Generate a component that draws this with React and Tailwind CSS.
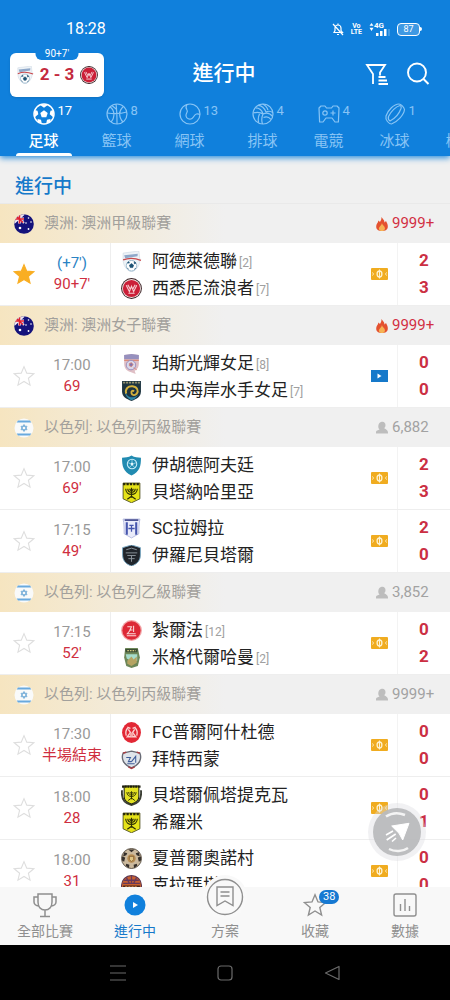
import { useState } from "react";
import clsx from "clsx";

const sports = [
  { name: "足球", count: 17, icon: "soccer", width: "w-[73px]" },
  { name: "籃球", count: 8, icon: "basketball", width: "w-[73px]" },
  { name: "網球", count: 13, icon: "tennis", width: "w-[73px]" },
  { name: "排球", count: 4, icon: "volleyball", width: "w-[73px]" },
  { name: "電競", count: 4, icon: "esports", width: "w-[59px]" },
  { name: "冰球", count: 1, icon: "hockey", width: "w-[73px]" },
  { name: "棒球", icon: "tennis", width: "w-[59px]" },
];

const leagues = [
  {
    country: "au",
    name: "澳洲: 澳洲甲級聯賽",
    viewers: "9999+",
    hot: true,
    matches: [
      {
        time: "(+7')",
        status: "90+7'",
        extra: true,
        starred: true,
        media: "field",
        teams: [
          { name: "阿德萊德聯", rank: 2, crest: "adelaide", score: 2 },
          { name: "西悉尼流浪者", rank: 7, crest: "wanderers", score: 3 },
        ],
      },
    ],
  },
  {
    country: "au",
    name: "澳洲: 澳洲女子聯賽",
    viewers: "9999+",
    hot: true,
    matches: [
      {
        time: "17:00",
        status: "69",
        media: "video",
        teams: [
          { name: "珀斯光輝女足", rank: 8, crest: "perth", score: 0 },
          { name: "中央海岸水手女足", rank: 7, crest: "mariners", score: 0 },
        ],
      },
    ],
  },
  {
    country: "il",
    name: "以色列: 以色列丙級聯賽",
    viewers: "6,882",
    matches: [
      {
        time: "17:00",
        status: "69'",
        media: "field",
        teams: [
          { name: "伊胡德阿夫廷", crest: "blueShield", score: 2 },
          { name: "貝塔納哈里亞", crest: "menorah", score: 3 },
        ],
      },
      {
        time: "17:15",
        status: "49'",
        media: "field",
        teams: [
          { name: "SC拉姆拉", crest: "ramla", score: 2 },
          { name: "伊羅尼貝塔爾", crest: "blackShield", score: 0 },
        ],
      },
    ],
  },
  {
    country: "il",
    name: "以色列: 以色列乙級聯賽",
    viewers: "3,852",
    matches: [
      {
        time: "17:15",
        status: "52'",
        media: "field",
        teams: [
          { name: "紮爾法", rank: 12, crest: "redRound", score: 0 },
          { name: "米格代爾哈曼", rank: 2, crest: "green", score: 2 },
        ],
      },
    ],
  },
  {
    country: "il",
    name: "以色列: 以色列丙級聯賽",
    viewers: "9999+",
    matches: [
      {
        time: "17:30",
        status: "半場結束",
        media: "field",
        teams: [
          { name: "FC普爾阿什杜德", crest: "redOval", score: 0 },
          { name: "拜特西蒙", crest: "silver", score: 0 },
        ],
      },
      {
        time: "18:00",
        status: "28",
        media: "field",
        teams: [
          { name: "貝塔爾佩塔提克瓦", crest: "menorahWreath", score: 0 },
          { name: "希羅米", crest: "menorah", score: 1 },
        ],
      },
      {
        time: "18:00",
        status: "31",
        media: "field",
        teams: [
          { name: "夏普爾奧諾村", crest: "ball", score: 0 },
          { name: "克拉瑪塔", crest: "orange", score: 0 },
        ],
      },
    ],
  },
];

const STAR = "M12 1.8l3 7.1 7.7 .6-5.9 5 1.8 7.5-6.6-4-6.6 4 1.8-7.5-5.9-5 7.7-.6z";

function Menorah() {
  return (
    <g fill="none" stroke="#2b2c05" strokeWidth="1.1">
      <path d="M4.5 6.5c0 7 11 7 11 0M6.5 6.5c0 4.5 7 4.5 7 0M8.3 6.5c0 2.2 3.4 2.2 3.4 0M10 5.5v9.5M6 16.5l4-3 4 3" />
    </g>
  );
}

const crests = {
  adelaide: (
    <>
      <path d="M2 2l15-2 1 8c0 6-3 10-8 12-5-2-8-6-8-12z" fill="#eef3f7" stroke="#c6d3df" strokeWidth="0.5" />
      <path d="M3 4l13-1.5-.3 2.5L4 7z" fill="#8fa8c9" />
      <path d="M2 8.5c5-2 11-2 17 .5" fill="none" stroke="#c8484c" strokeWidth="1.2" />
      <circle cx="10" cy="14" r="5" fill="#fff" stroke="#6f9ab8" strokeWidth="0.6" />
      <path d="M10 12l2 1.5-.8 2.3H8.8L8 13.5zM6 11.5l1.5-1.3 .5 1.3zM12.500 10.200l1.8 1.3-1.500.8zM12.500 17.500l1.800-1.200M6 16l1.200 1.500" fill="#1d5274" stroke="#1d5274" strokeWidth="0.6" />
    </>
  ),
  wanderers: (
    <>
      <circle cx="10" cy="10" r="9.9" fill="#3a2226" />
      <circle cx="10" cy="10" r="9" fill="#f0e4e2" />
      <circle cx="10" cy="10" r="8.2" fill="#cb1f38" />
      <path d="M5 7l3 6 2-5 2 5 3-6M6.5 6.5L9 11M13.5 6.5L11 11M7 14.5h6" fill="none" stroke="#f6cdd0" strokeWidth="1.1" />
    </>
  ),
  perth: (
    <>
      <path d="M3 2l7-1 7 1v8c0 4-2 6-4 7l1 3-5-2c-4-1-6-4-6-8z" fill="#dfbfc5" />
      <path d="M3 2l7-1 7 1v4H3z" fill="#9690be" />
      <path d="M3 7h14" stroke="#dd8c79" strokeWidth="1.2" />
      <circle cx="9.5" cy="11.5" r="4.5" fill="#d9d8ea" stroke="#8a7fb5" strokeWidth="0.7" />
      <path d="M8 10l2-.8 1.5 1.8L10 13l-2-.8zM12 14l3 2" fill="#8174ae" stroke="#d98577" strokeWidth="0.8" />
    </>
  ),
  mariners: (
    <>
      <path d="M1 1h18v10c0 5-4 7-9 9-5-2-9-4-9-9z" fill="#1d3440" />
      <path d="M2 2.5h16" stroke="#92906e" strokeWidth="1.5" strokeDasharray="2 .8" />
      <path d="M3.500 9c1 7 7 10 13 5-2 3-4 4.500-6.500 5.200-4-1.700-6.500-5-6.500-10.200z" fill="#2d86a8" />
      <path d="M5 13C3.500 8.500 7 5.500 11 6c4.500 .5 6 4.500 4 7-1.500 2-4.500 1.700-5-.3s1-3 2.500-2" fill="none" stroke="#d4b13d" strokeWidth="1.800" />
    </>
  ),
  blueShield: (
    <>
      <path d="M10 .5c3 2 6 2 9 2 0 8-1 13-9 17C2 15.5 1 10.5 1 2.5c3 0 6 0 9-2z" fill="#218bb1" />
      <circle cx="10.5" cy="8.5" r="4.5" fill="none" stroke="#c8eefa" strokeWidth="1" />
      <path d="M10.5 7l1.500 1.200-.6 1.800H9.600L9 8.200z" fill="#e3f7fc" />
      <path d="M10.5 4v3M6.500 7.300l2.500 .9M14.500 7.300l-2.500 .9M9.600 10l-1.500 2M11.400 10l1.500 2" stroke="#c8eefa" strokeWidth="0.6" />
    </>
  ),
  menorah: (
    <>
      <path d="M2 1h16v15l-8 3.8L2 16z" fill="#e6e318" stroke="#44450f" strokeWidth="0.8" />
      <path d="M2 2h16" stroke="#25260a" strokeWidth="2" strokeDasharray="2.2 1" />
      <Menorah />
    </>
  ),
  menorahWreath: (
    <>
      <path d="M1 5c-1 9 3 13 9 14 6-1 10-5 9-14" fill="none" stroke="#3c3f35" strokeWidth="1.8" />
      <path d="M3 1h14v10c0 4-3 6-7 7-4-1-7-3-7-7z" fill="#e3e222" stroke="#222411" strokeWidth="1" />
      <path d="M1 1.5h18" stroke="#1b1c0c" strokeWidth="2.2" strokeDasharray="2 .5" />
      <g transform="translate(2 1.6) scale(.8)">
        <Menorah />
      </g>
    </>
  ),
  ramla: (
    <>
      <path d="M2 1h16c-1 5-1 10-1 14l-7 4-7-4C3 10 3 5 2 1z" fill="#e9ebfa" stroke="#aeb4dc" strokeWidth="0.8" />
      <path d="M3.5 2h13" stroke="#394187" strokeWidth="1.5" />
      <path d="M5.5 4v12M14.5 4v12" stroke="#4555ad" strokeWidth="2" />
      <path d="M8 7h4M10 7v6M7 10h6" stroke="#4555ad" strokeWidth="1.2" />
    </>
  ),
  blackShield: (
    <>
      <path d="M10 0l8.5 2.5V9c0 6-3 9-8.5 11C4.5 18 1.5 15 1.5 9V2.5z" fill="#20252b" stroke="#78a8c3" strokeWidth="0.9" />
      <path d="M5 4.5l5-1.5 5 1.5M4.5 7.5h11M6 10h8M10 10v6M7 13h6" fill="none" stroke="#8c969d" strokeWidth="0.9" />
    </>
  ),
  redRound: (
    <>
      <circle cx="10" cy="10" r="9.9" fill="#f2a2a5" />
      <circle cx="10" cy="10" r="8.7" fill="#dd2836" />
      <path d="M6 6.5h4l-1.5 3H11M12 5.5v6M9 9.5L6 13h8M5.500 15h9" fill="none" stroke="#fbd9d9" strokeWidth="1" />
    </>
  ),
  green: (
    <>
      <path d="M4 1h12l2 9-2 8-6 2-5-2-2-8z" fill="#6d8758" />
      <path d="M4 2h12l-.5 3h-11z" fill="#3b4e34" />
      <path d="M6 3.5h8" stroke="#d7cc83" strokeWidth="1.3" strokeDasharray="1.5 1" />
      <path d="M4.5 7h11v6l-5 1-5-3z" fill="#a6dccb" />
      <path d="M6 13l4-4 2 3 3-3v6l-5 3-4-2z" fill="#b6a463" />
    </>
  ),
  redOval: (
    <>
      <ellipse cx="10" cy="10" rx="9" ry="9.9" fill="#e22835" />
      <path d="M5 13c-1-3 0-6 2-8M15 13c1-3 0-6-2-8M7 7l2 3-3 4h8l-3-4 2-3M6 5l3 1M14 5l-3 1" fill="none" stroke="#fbd3d3" strokeWidth="1.3" />
      <circle cx="10" cy="12" r="2" fill="#f4a5a5" />
    </>
  ),
  silver: (
    <>
      <path d="M10 2l4 1 4 1c2 5 0 11-8 14C2 15 0 9 2 4l4-1z" fill="#dfe4ea" stroke="#686b75" strokeWidth="1.3" />
      <path d="M2 4l3-1M15 3l3 1M7 17l3 1.5 3-1.5" fill="none" stroke="#a83d43" strokeWidth="1.4" />
      <path d="M5 8h4l-2 4h3M10 12l4-5v6M6 14h7" fill="none" stroke="#3f5d9a" strokeWidth="1" />
    </>
  ),
  ball: (
    <>
      <circle cx="10" cy="10" r="9.5" fill="#cbb99d" stroke="#554b40" strokeWidth="0.9" />
      <path d="M7 1.5h6L10 4zM1 8l3 1-1 4-2-1zM19 8l-3 1 1 4 2-1zM5 15l3 1-.5 3-3-2zM15 15l-3 1 .5 3 3-2zM3 4l3 1-1 2-3 1zM17 4l-3 1 1 2 3 1z" fill="#342f2b" />
      <circle cx="10" cy="10" r="4" fill="#b88d52" />
      <path d="M8 8h4v3l-2 2-2-2z" fill="#dfc483" stroke="#72502a" strokeWidth="0.6" />
    </>
  ),
  orange: (
    <>
      <circle cx="10" cy="10" r="9.5" fill="#c9602f" stroke="#563450" strokeWidth="1" />
      <path d="M2 8h16M3 5h14M5 2l3 6M15 2l-3 6M10 1v7" stroke="#68385a" strokeWidth="1.2" />
      <path d="M2 10h16v3H2z" fill="#46251d" />
      <path d="M4 11.5h12" stroke="#e08a4b" strokeWidth="1.5" strokeDasharray="2 1" />
    </>
  ),
};

function Crest({ name, className = "size-5" }) {
  return (
    <svg viewBox="0 0 20 20" className={clsx("shrink-0", className)} aria-hidden="true">
      {crests[name]}
    </svg>
  );
}

function Flag({ country }) {
  if (country === "au") {
    return (
      <svg viewBox="0 0 20 20" className="size-5 shrink-0" aria-hidden="true">
        <clipPath id="flagClip">
          <circle cx="10" cy="10" r="9.8" />
        </clipPath>
        <g clipPath="url(#flagClip)">
          <path d="M0 0h20v20H0z" fill="#14127b" />
          <path d="M0 0l10 9M10 0L0 9" stroke="#f2e8f1" strokeWidth="2" />
          <path d="M0 5h10M5.5 0v9.5" stroke="#f5e8ef" strokeWidth="2.8" />
          <path d="M0 5h10M5.5 0v9.5M1 1l8 7.5" stroke="#e0202f" strokeWidth="1.5" />
          <g fill="#fff">
            <circle cx="6" cy="14" r="1.3" />
            <circle cx="14.5" cy="4" r=".8" />
            <circle cx="17" cy="8" r=".8" />
            <circle cx="12" cy="9" r=".8" />
            <circle cx="14.5" cy="15" r=".9" />
          </g>
        </g>
      </svg>
    );
  }
  return (
    <svg viewBox="0 0 20 20" className="size-5 shrink-0" aria-hidden="true">
      <circle cx="10" cy="10" r="9.5" fill="#f9fafa" />
      <path d="M4 2.500h12l1.300 2H2.700zM2.700 15.500h14.600l-1.300 2H4z" fill="#69a9de" />
      <path d="M10 6.5l3 5.2H7zM10 13.5l3-5.2H7z" fill="none" stroke="#78afd9" strokeWidth="1" />
    </svg>
  );
}

function SportIcon({ name }) {
  return (
    <svg viewBox="0 0 22 22" className="size-[22px]" fill="none" stroke="currentColor" strokeWidth="1.2" aria-hidden="true">
      {name === "soccer" && (
        <>
          <circle cx="11" cy="11" r="10" strokeWidth="1.5" />
          <g fill="currentColor" stroke="none">
            <path d="M11 7.200l3.700 2.700-1.400 4.300H8.700L7.300 9.900z" />
            <path d="M6.500 1.500h9L11 4.800zM1 7l3.500 .8 .8 3.400-3.300 2.800zM21 7l-3.500 .8-.8 3.400 3.300 2.800zM4.500 16l3.500 .8 .8 3.700L5 19zM17.500 16l-3.500 .8-.8 3.700L17 19z" />
          </g>
        </>
      )}
      {name === "basketball" && (
        <>
          <circle cx="11" cy="11" r="10" />
          <path d="M10 1c1 7 1 13 1 20M1.2 10c7 1 13 1 19.6-1M4 4c5 3 5 11 1 15M17.5 3.5c-5 4-5 11-.5 15.5M6 2.5c2 2 4 3 4.5 4" />
        </>
      )}
      {name === "tennis" && (
        <>
          <circle cx="11" cy="11" r="10" />
          <path d="M8 1.500c-1.500 2-1 4 0 5.500 1.500 2-1.500 3-1 6 .5 2.500 3.500 4 6 2.500 2.500-1.500 2-4 4.500-4.500 1.500-.3 2.500 0 3.500 .5" />
        </>
      )}
      {name === "volleyball" && (
        <>
          <circle cx="11" cy="11" r="10" />
          <path d="M11 11C10 7 7 4.800 3.500 4.800M14 9C12.500 5 9.500 2.500 6 2.300M16 7C15 4 13 2 10.500 1M11 11c4-2 7-1 9.500 2.500M11.500 14.500c3-1.500 5.500-.5 7.500 1.800M11 11c-1.500 3.500-1.500 7-.5 10M7.500 11c-1.500 3-1.500 6-.8 8.800M11 11c-3-2-6.500-2-9.700-1M14 9c2.500-1.200 5-.8 7 .8" />
        </>
      )}
      {name === "esports" && (
        <>
          <path d="M3 3h4l1.5 2h5L15 3h4l2 2-.6 14H17l-3-4H8l-3 4H1.6L1 5z" strokeLinejoin="round" />
          <circle cx="7" cy="10" r="2.2" />
          <path d="M15 7.5v5M12.5 10h5" />
        </>
      )}
      {name === "hockey" && (
        <>
          <path d="M2 13C4 7 10 1 15 1c2 0 5 3 5.5 5.5C20 12 13 19 7.5 21 5 21 1 17 2 13z" />
          <path d="M4.5 13.5C7 8 12 3.5 16 2.5c1 .2 1.5 1.500 1 3C15 11 11 15.500 6 18c-1.500-.8-2-2.500-1.500-4.500z" />
        </>
      )}
    </svg>
  );
}

function StatusIcons() {
  return (
    <div className="flex items-center gap-[7px]">
      <svg viewBox="0 0 12 14" className="h-3.5 w-3" fill="none" stroke="currentColor" aria-hidden="true">
        <path d="M2 10.5h8.5L9 8.5V6a3 3 0 0 0-6 0v2.500zM6 1.500v1.500M5 12.500h2M1 2l10 11" strokeWidth="1.2" />
      </svg>
      <div className="flex flex-col items-center text-[7px] leading-[6px] font-bold">
        <span>Vo</span>
        <span>LTE</span>
      </div>
      <div className="flex items-start">
        <svg viewBox="0 0 5 10" className="h-2 w-[5px]" fill="currentColor" aria-hidden="true">
          <path d="M2.5 0L5 3.5H0zM2.5 10L5 6H0z" />
        </svg>
        <div className="flex flex-col">
          <span className="text-[8px] leading-[6px] font-bold">4G</span>
          <svg viewBox="0 0 16 7" className="h-[7px] w-4" fill="currentColor" aria-hidden="true">
            <path d="M2 4h2.5v3H2zM6 2h2.5v5H6zM10 0h2.5v7H10z" />
            <path d="M14.500 0h1v7h-1z" opacity=".4" />
          </svg>
        </div>
      </div>
      <div className="flex items-center">
        <div className="flex h-[13px] w-[23px] items-center justify-center rounded-[4px] border border-white bg-white/20 text-[9px] leading-none">
          87
        </div>
        <div className="h-1 w-0.5 rounded-r bg-white" />
      </div>
    </div>
  );
}

function ScoreCard() {
  return (
    <button
      type="button"
      className="relative flex h-11 w-[94px] items-center justify-center gap-1.5 rounded-md bg-white text-[17px] font-bold text-[#c42a3e] shadow"
    >
      <span className="absolute -top-1.5 left-1/2 flex h-[13px] w-[43px] -translate-x-1/2 items-center justify-center rounded-b-md bg-[#1080dc] text-[10px] leading-3 font-normal text-white">
        90+7'
      </span>
      <Crest name="adelaide" className="size-[18px]" />
      <span>2 - 3</span>
      <Crest name="wanderers" className="size-[18px]" />
    </button>
  );
}

function Header({ sport, onSport }) {
  return (
    <header className="relative z-10 shrink-0 overflow-hidden bg-[#1080dc] text-white shadow-[0_2px_6px_#2d8fdc]">
      <div className="flex h-[50px] items-center justify-between pt-2 pr-7 pl-[66px]">
        <span className="text-base">18:28</span>
        <StatusIcons />
      </div>
      <div className="grid h-12 grid-cols-3 items-center pr-5 pl-2.5">
        <div className="pt-0.5">
          <ScoreCard />
        </div>
        <h1 className="pl-2 text-center text-[21px] font-medium">進行中</h1>
        <div className="flex justify-end gap-[17px]">
          <button type="button" aria-label="篩選">
            <svg viewBox="0 0 24 24" className="size-6" fill="none" stroke="currentColor" strokeWidth="1.8" aria-hidden="true">
              <path d="M8 22V12L2 3h18l-5 7.500v3M13.500 15h7M13.500 18.500H22M13.500 22H23" />
            </svg>
          </button>
          <button type="button" aria-label="搜尋">
            <svg viewBox="0 0 24 24" className="size-6" fill="none" stroke="currentColor" strokeWidth="1.9" aria-hidden="true">
              <circle cx="11" cy="10.5" r="9" />
              <path d="M17.5 17l5 5" />
            </svg>
          </button>
        </div>
      </div>
      <nav className="flex h-[58px] pl-[7px]">
        {sports.map((s) => (
          <button
            key={s.name}
            type="button"
            onClick={() => onSport(s.name)}
            className={clsx(
              "flex shrink-0 flex-col items-center pt-[5px]",
              s.width,
              s.name === sport ? "font-medium text-white" : "text-[#88c4f5]"
            )}
          >
            <span className="relative">
              <SportIcon name={s.icon} />
              <span className="absolute top-0 left-[25px] text-[13px] leading-4 font-normal">{s.count}</span>
            </span>
            <span className="mt-1.5 text-[15px] leading-5">{s.name}</span>
            {s.name === sport && <span className="mt-0.5 h-[3px] w-14 shrink-0 rounded-t bg-white" />}
          </button>
        ))}
      </nav>
    </header>
  );
}

function MediaIcon({ type }) {
  if (type === "video") {
    return (
      <svg viewBox="0 0 17 12" className="h-3 w-[17px] shrink-0" aria-hidden="true">
        <path d="M0 0h17v12H0z" fill="#1679ca" />
        <path d="M6.5 3.5l4 2.5-4 2.5z" fill="#fff" />
      </svg>
    );
  }
  return (
    <svg viewBox="0 0 17 12" className="h-3 w-[17px] shrink-0" aria-hidden="true">
      <rect width="17" height="12" rx="1" fill="#f0ac20" />
      <ellipse cx="8.5" cy="6" rx="2.4" ry="3" fill="none" stroke="#fff3d0" strokeWidth="1.3" />
      <path d="M8.5 1.500v9M1.500 4.500c1 1 1 2 0 3M15.500 4.500c-1 1-1 2 0 3" fill="none" stroke="#fff3d0" strokeWidth="1" />
    </svg>
  );
}

function Viewers({ league }) {
  return (
    <span className={clsx("flex w-[59px] items-center gap-1 text-[15px]", league.hot ? "text-[#d22f43]" : "text-[#a2a2a2]")}>
      {league.hot ? (
        <svg viewBox="0 0 12 14" className="h-3.5 w-3 shrink-0" aria-hidden="true">
          <path d="M5.5 0c1 2 3 3 3 5.500L10 4c1 2 2 3.500 1.800 6C11.500 13 9 14 6 14S.5 13 .2 10C0 7 2 6 2.500 3.500L4 5c1-1.500 1.500-3 1.500-5z" fill="#e4512f" />
          <path d="M6 6c0 2 3 3 3 5.500C8.500 13.500 7.500 14 6 14s-3-.5-3.200-2.500C3 9.500 5.500 8.500 6 6z" fill="#f6b254" />
        </svg>
      ) : (
        <svg viewBox="0 0 12 14" className="h-3.5 w-3 shrink-0" fill="#bdbdbd" aria-hidden="true">
          <path d="M5 1c2.500-1 4.500 .5 4.500 3 0 1.500-.5 2.500-1.300 3.200C10 8.500 12 9 12 11.500v1H0V11c0-1.500 2-2 3.500-2.500C1.500 6.500 2 2 5 1z" />
        </svg>
      )}
      {league.viewers}
    </span>
  );
}

function MatchRow({ match }) {
  const [starred, setStarred] = useState(Boolean(match.starred));

  return (
    <li className="flex h-[63px] border-b border-[#eeeeee] bg-white">
      <button
        type="button"
        aria-label="收藏"
        onClick={() => setStarred(!starred)}
        className="flex w-12 shrink-0 items-center justify-center"
      >
        <svg
          viewBox="0 0 24 24"
          className="size-[22px]"
          fill={starred ? "#f9ae23" : "none"}
          stroke={starred ? "#f9ae23" : "#dedede"}
          strokeWidth="1.2"
          aria-hidden="true"
        >
          <path d={STAR} />
        </svg>
      </button>
      <div className="flex w-12 shrink-0 flex-col items-center justify-center whitespace-nowrap">
        <span className={clsx("text-[15px] leading-[21px]", match.extra ? "text-[#2a83c4]" : "text-[#999999]")}>
          {match.time}
        </span>
        <span className="text-[15px] leading-[21px] text-[#cf2e40]">{match.status}</span>
      </div>
      <div className="ml-3.5 flex min-w-0 flex-1 items-center border-l border-[#eeeeee] pr-[9px] pl-2.5">
        <div className="min-w-0 flex-1 pt-0.5">
          {match.teams.map((t) => (
            <div key={t.name} className="flex h-[27px] items-center gap-2.5">
              <Crest name={t.crest} className="size-[21px]" />
              <span className="text-[17px] whitespace-nowrap text-[#222222]">
                {t.name}
                {t.rank && <span className="pl-0.5 text-xs text-[#a0a0a0]">[{t.rank}]</span>}
              </span>
            </div>
          ))}
        </div>
        <MediaIcon type={match.media} />
      </div>
      <div className="flex w-[53px] shrink-0 flex-col items-center justify-center border-l border-[#f3f3f3] text-[17px] leading-[27px] font-bold text-[#cb2f43]">
        {match.teams.map((t) => (
          <span key={t.name}>{t.score}</span>
        ))}
      </div>
    </li>
  );
}

function League({ league }) {
  return (
    <section>
      <div className="flex h-[39px] items-center gap-2.5 bg-linear-to-r from-[#f6e5c0] to-[#f0f0f0] to-50% pr-[15px] pl-3.5">
        <Flag country={league.country} />
        <h3 className="flex-1 text-[15px] text-[#a2a09c]">{league.name}</h3>
        <Viewers league={league} />
      </div>
      <ul>
        {league.matches.map((m, i) => (
          <MatchRow key={i} match={m} />
        ))}
      </ul>
    </section>
  );
}

function NavLabel({ children }) {
  return <span className="text-sm leading-5">{children}</span>;
}

function BottomNav() {
  const item = "flex flex-1 flex-col items-center gap-0.5 pt-1 text-[#8f8f8f]";
  return (
    <nav className="relative z-10 flex h-[58px] shrink-0 bg-[#f8f8f8]">
      <a href="#all" className={item}>
        <svg viewBox="0 0 28 28" className="size-7" fill="none" stroke="currentColor" strokeWidth="1.5" aria-hidden="true">
          <path d="M7 3h14v8c0 5-3 8-7 8s-7-3-7-8zM7 6H3v5c0 2 2 4 4.500 4M21 6h4v5c0 2-2 4-4.500 4M14 19v6M9 25.500h10" />
        </svg>
        <NavLabel>全部比賽</NavLabel>
      </a>
      <a href="#live" className="flex flex-1 flex-col items-center gap-0.5 pt-1 text-[#1679ca]">
        <svg viewBox="0 0 28 28" className="size-7" aria-hidden="true">
          <circle cx="14" cy="14" r="10.5" fill="#1080dc" />
          <path d="M12 11l5 3-5 3z" fill="#fff" />
        </svg>
        <NavLabel>進行中</NavLabel>
      </a>
      <a href="#tips" className="flex flex-1 flex-col items-center gap-0.5 text-[#8f8f8f]">
        <span className="-mt-3 flex size-11 items-center justify-center rounded-full bg-[#f9f9f9]">
          <svg viewBox="0 0 38 38" className="size-[38px]" fill="none" stroke="currentColor" strokeWidth="1.4" aria-hidden="true">
            <circle cx="19" cy="19" r="17.5" />
            <path d="M11 9h16v18.500l-8-4.500-8 4.500zM14.500 14h9M14.500 18h9" />
          </svg>
        </span>
        <NavLabel>方案</NavLabel>
      </a>
      <a href="#favorites" className={item}>
        <span className="relative flex size-7 items-center justify-center">
          <svg viewBox="0 0 24 24" className="size-6" fill="none" stroke="currentColor" strokeWidth="1.4" aria-hidden="true">
            <path d={STAR} />
          </svg>
          <span className="absolute -top-px left-[18px] rounded-full bg-[#1679d2] px-1 text-[11px] leading-[14px] text-white">
            38
          </span>
        </span>
        <NavLabel>收藏</NavLabel>
      </a>
      <a href="#stats" className={item}>
        <svg viewBox="0 0 28 28" className="size-7" fill="none" stroke="currentColor" strokeWidth="1.4" aria-hidden="true">
          <rect x="3" y="3" width="22" height="22" rx="2" />
          <path d="M9.5 13v7M14 8v12M18.5 15v5" />
        </svg>
        <NavLabel>數據</NavLabel>
      </a>
    </nav>
  );
}

function SystemNav() {
  return (
    <div className="flex h-[55px] shrink-0 bg-black px-16 text-[#6b6b6b]">
      <button type="button" aria-label="最近" className="flex flex-1 items-center justify-center">
        <svg viewBox="0 0 20 20" className="size-5" fill="none" stroke="currentColor" strokeWidth="1.2" aria-hidden="true">
          <path d="M2 3h16M2 10h16M2 17h16" />
        </svg>
      </button>
      <button type="button" aria-label="主畫面" className="flex flex-1 items-center justify-center">
        <svg viewBox="0 0 20 20" className="size-5" fill="none" stroke="currentColor" strokeWidth="1.2" aria-hidden="true">
          <rect x="3" y="3" width="14" height="14" rx="3" />
        </svg>
      </button>
      <button type="button" aria-label="返回" className="flex flex-1 items-center justify-center">
        <svg viewBox="0 0 20 20" className="size-5" fill="none" stroke="currentColor" strokeWidth="1.2" aria-hidden="true">
          <path d="M17 3.500v13L3.500 10z" strokeLinejoin="round" />
        </svg>
      </button>
    </div>
  );
}

function App() {
  const [sport, setSport] = useState("足球");

  return (
    <div className="flex h-screen flex-col overflow-hidden bg-[#f0f0f0] font-['Roboto','Noto_Sans_CJK_TC',sans-serif]">
      <Header sport={sport} onSport={setSport} />
      <main className="relative min-h-0 flex-1 overflow-hidden">
        <h2 className="flex h-12 items-end border-b border-[#e9e9e9] px-[15px] pb-0.5 text-[19px] font-medium text-[#1679ca]">
          進行中
        </h2>
        {leagues.map((l, i) => (
          <League key={i} league={l} />
        ))}
        <button
          type="button"
          aria-label="重新整理"
          className="absolute right-6 bottom-[26px] size-[58px] rounded-full bg-[#dcdce0]/40 p-[5px]"
        >
          <svg viewBox="0 0 48 48" className="size-12" aria-hidden="true">
            <circle cx="24" cy="24" r="24" fill="#b9babd" fillOpacity=".95" />
            <path d="M18.700 18L36 15.300 29.700 32 26 25.300z" fill="#fff" stroke="#fff" strokeWidth="1" strokeLinejoin="round" />
            <path d="M13 27l7-4M13.700 32l9-6M19 33.500l4-3.500" stroke="#fff" strokeWidth="1.6" />
            <path d="M13 8.500c6-4 13-4 19-1.500M35 40c-5 3.500-13 4-19 1" fill="none" stroke="#f4f4f4" strokeWidth="2.5" />
          </svg>
        </button>
      </main>
      <BottomNav />
      <SystemNav />
    </div>
  );
}

export default App;
